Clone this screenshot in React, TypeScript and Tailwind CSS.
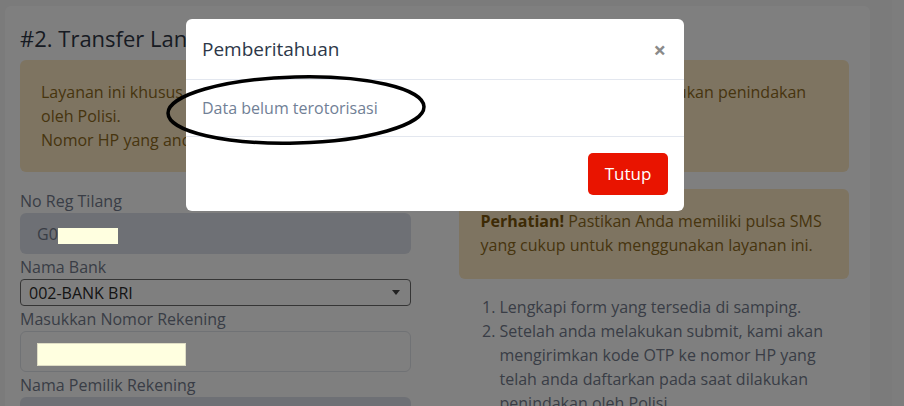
import React from 'react';

const font = { fontFamily: '"Open Sans", "Liberation Sans", sans-serif' };

export default function App() {
    return (
        <div className="relative h-[406px] w-[904px] overflow-hidden bg-[#f6f6f6]" style={font}>
            {/* Page behind the dialog */}
            <div className="flex h-full">
                <div className="ml-[5px] mt-[6px] w-[865px] rounded-t-md bg-white px-[15px] pt-[16px]">
                    <h2 className="text-[22px] leading-[32px] text-[#2f3645]">#2. Transfer Langsung ke Rekening</h2>

                    <div className="mr-[6px] mt-[6px] rounded-md bg-[#fce8c2] px-[21px] py-5 text-[16px] leading-6 text-[#8e6a1c]">
                        Layanan ini khusus bagi pelanggar yang nomor HP-nya telah terdaftar pada saat dilakukan penindakan
                        <br />
                        oleh Polisi.
                        <br />
                        Nomor HP yang anda daftarkan harus aktif.
                    </div>

                    <div className="mr-[6px] mt-[17px] grid grid-cols-2 gap-12">
                        {/* Left column: form */}
                        <div className="flex flex-col text-[16px] leading-6 text-[#737b8c]">
                            <label>No Reg Tilang</label>
                            <div className="flex h-[41px] items-center rounded-md bg-[#dde1ea] px-[17px] text-[#737b8c]">G0</div>
                            <label className="mt-px">Nama Bank</label>
                            <div className="flex h-[27px] items-center justify-between rounded-[4px] border border-[#6b6b6b] px-2 text-[#2a2a2a]">
                                <span>002-BANK BRI</span>
                                <span className="mr-[2px] h-0 w-0 border-x-[4px] border-t-[5px] border-x-transparent border-t-[#444]" />
                            </div>
                            <label className="mt-px">Masukkan Nomor Rekening</label>
                            <div className="h-[41px] rounded-md border border-[#e1e4ea] bg-white" />
                            <label className="mt-px">Nama Pemilik Rekening</label>
                            <div className="h-[41px] rounded-md bg-[#dde1ea]" />
                        </div>

                        {/* Right column: notes */}
                        <div className="flex flex-col">
                            <div className="rounded-md bg-[#fce8c2] px-[22px] pb-[22px] pt-5 text-[16px] leading-6 text-[#8e6a1c]">
                                <b className="font-bold text-[#7a5509]">Perhatian!</b> Pastikan Anda memiliki pulsa SMS
                                <br />
                                yang cukup untuk menggunakan layanan ini.
                            </div>
                            <ol className="mt-4 list-decimal pl-[41px] text-[16px] leading-6 text-[#737b8c]">
                                <li>Lengkapi form yang tersedia di samping.</li>
                                <li>
                                    Setelah anda melakukan submit, kami akan
                                    <br />
                                    mengirimkan kode OTP ke nomor HP yang
                                    <br />
                                    telah anda daftarkan pada saat dilakukan
                                    <br />
                                    penindakan oleh Polisi.
                                </li>
                            </ol>
                        </div>
                    </div>
                </div>
                <div className="ml-[22px] w-[12px] bg-[#fafafa]" />
            </div>

            {/* Backdrop */}
            <div className="absolute inset-0 bg-black/50" />

            {/* Redaction marks on the screenshot */}
            <div className="absolute left-[58px] top-[228px] h-[16px] w-[60px] bg-[#ffffe0]" />
            <div className="absolute left-[37px] top-[343px] h-[23px] w-[149px] border border-[#dedcc4] bg-[#ffffe0]" />

            {/* Dialog */}
            <div className="absolute left-[186px] top-[19px] w-[498px] rounded-md bg-white">
                <div className="flex items-center justify-between border-b border-[#e3e7ef] px-4 py-[15px]">
                    <h3 className="text-[19px] leading-[30px] text-[#2d3748]">Pemberitahuan</h3>
                    <span className="mr-[2px] text-[22px] font-bold leading-none text-[#8a8a8a]">×</span>
                </div>
                <div className="border-b border-[#e3e7ef] px-4 py-4 text-[16px] leading-6 text-[#718096]">Data belum terotorisasi</div>
                <div className="flex justify-end p-4">
                    <button className="h-[42px] w-[80px] rounded-[5px] bg-[#e91400] text-[17px] text-white">Tutup</button>
                </div>
            </div>

            {/* Hand-drawn circle annotation */}
            <svg className="absolute left-0 top-0" width="904" height="406" viewBox="0 0 904 406" fill="none">
                <ellipse cx="296" cy="110" rx="128" ry="33" stroke="black" strokeWidth="3.5" transform="rotate(-1.5 296 110)" />
            </svg>
        </div>
    );
}
